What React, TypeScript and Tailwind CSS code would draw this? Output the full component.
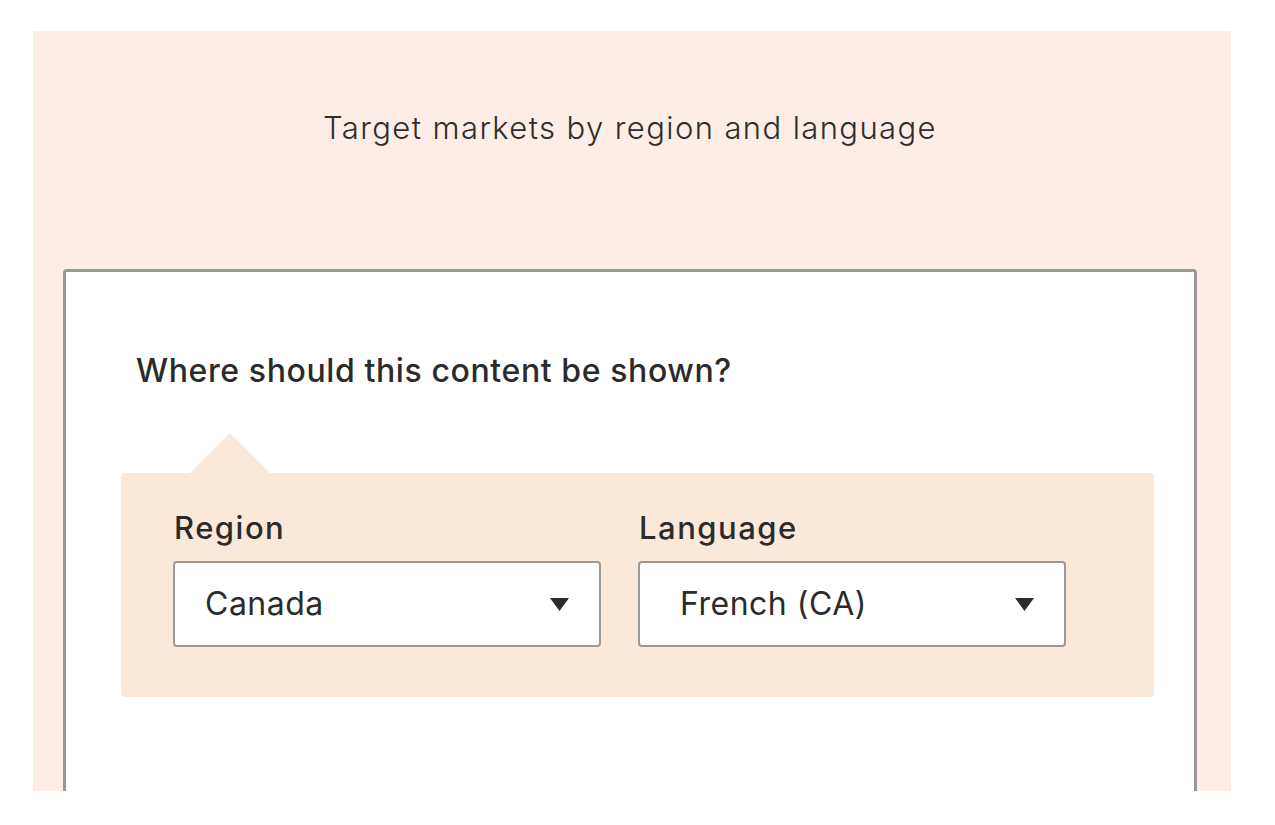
import React from 'react';

const fields = [
  { key: 'region', label: 'Region', value: 'Canada', pad: 'pl-[30px]' },
  { key: 'language', label: 'Language', value: 'French (CA)', pad: 'pl-[40px]' },
];

const Caret = () => (
  <svg width="19" height="13" viewBox="0 0 19 13" className="shrink-0">
    <path d="M0 0 H19 L9.5 13 Z" fill="#2b2b2b" />
  </svg>
);

export default function App() {
  return (
    <div className="min-h-[825px] bg-white pt-[31px] pl-[33px]" style={{ fontFamily: 'Inter, "Noto Sans", sans-serif' }}>
      <div className="w-[1198px] h-[760px] overflow-hidden bg-[#feede6] pl-[30px] pr-[34px]">
        {/* Header */}
        <h1 className="pt-[78px] text-center text-[31px] leading-[38px] font-light text-[#2d2d2d] tracking-[1.4px]">
          Target markets by region and language
        </h1>

        {/* Card */}
        <div className="mt-[122px] h-[600px] bg-white border-[3px] border-[#999999] rounded-[4px] pt-[81px]">
          <h2 className="pl-[70px] text-[32px] leading-[36px] font-medium text-[#2b2b2b] tracking-[0.6px]">
            Where should this content be shown?
          </h2>

          {/* Notch */}
          <div className="mt-[44px] ml-[124px] w-0 h-0 border-l-[40px] border-r-[40px] border-b-[40px] border-l-transparent border-r-transparent border-b-[#fae9d8]" />

          {/* Selection panel */}
          <div className="ml-[55px] mr-[40px] bg-[#fae9d8] rounded-[4px] pl-[52px] pt-[37px] pb-[50px] flex gap-[37px]">
            {fields.map((f) => (
              <div key={f.key} className="flex flex-col">
                <label className="pl-[1px] text-[31px] leading-[36px] font-medium text-[#2b2b2b] tracking-[1.5px]">
                  {f.label}
                </label>
                <div
                  className={`mt-[15px] w-[428px] h-[86px] bg-white border-2 border-[#9a9a9a] rounded-[4px] flex items-center justify-between pr-[30px] ${f.pad}`}
                >
                  <span className="text-[32px] leading-[36px] text-[#2b2b2b] tracking-[0.5px]">{f.value}</span>
                  <Caret />
                </div>
              </div>
            ))}
          </div>
        </div>
      </div>
    </div>
  );
}
